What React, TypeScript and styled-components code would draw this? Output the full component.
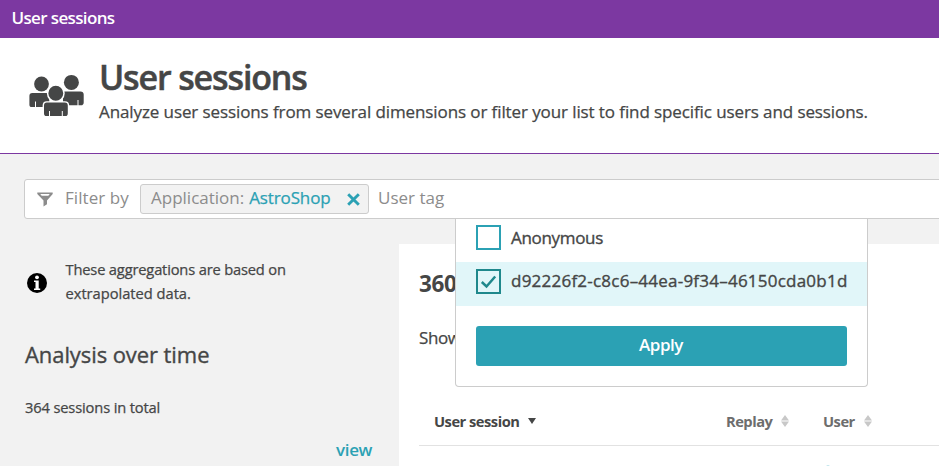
import React from "react";
import styled, { createGlobalStyle } from "styled-components";

const ink = "#454646";
const teal = "#2ba1b4";
const line = "#ccc";

const GlobalStyle = createGlobalStyle`
  * { box-sizing: border-box; }
  html, body, #root { margin: 0; height: 100%; }
  body {
    overflow: hidden;
    background: #f2f2f2;
    color: ${ink};
    font-family: "Open Sans", "Noto Sans", sans-serif;
    font-size: 17px;
    line-height: 24px;
    -webkit-text-stroke: 0.25px currentColor;
  }
  h1, h2, p { margin: 0; }
  button { font: inherit; border: 0; padding: 0; cursor: pointer; }
  svg { display: block; flex: none; }
`;

const Page = styled.div`
  height: 466px;
  overflow: hidden;
  display: flex;
  flex-direction: column;
`;

const TopBar = styled.nav`
  flex: none;
  height: 38px;
  padding-left: 11.5px;
  background: #7c38a1;
  color: #fff;
  font-weight: 600;
  letter-spacing: -0.64px;
  line-height: 35px;
  -webkit-text-stroke: 0;
`;

const Header = styled.header`
  flex: none;
  display: flex;
  height: 116px;
  padding: 19px 0 0 28px;
  background: #fff;
  border-bottom: 1px solid #7c38a1;
  svg { margin-top: 16px; }
`;

const Heading = styled.div`
  margin-left: 14px;
  white-space: nowrap;
`;

const Title = styled.h1`
  font-size: 34px;
  font-weight: 600;
  letter-spacing: -1.14px;
  line-height: 40px;
  -webkit-text-stroke: 0.5px currentColor;
`;

const Subtitle = styled.p`
  margin-top: 3px;
  letter-spacing: -0.1px;
`;

const FilterBar = styled.div`
  position: relative;
  z-index: 1;
  flex: none;
  display: flex;
  align-items: center;
  height: 40px;
  margin: 25px -10px 0 24px;
  padding-left: 12px;
  border: 1px solid ${line};
  border-radius: 3px;
  background: #fff;
  color: #8c8c8c;
  white-space: nowrap;
  -webkit-text-stroke: 0;
`;

const FilterLabel = styled.span`
  width: 75px;
  margin-left: 12px;
  padding-bottom: 2px;
  letter-spacing: 0.06px;
`;

const Chip = styled.div`
  display: flex;
  align-items: center;
  width: 229px;
  height: 30px;
  margin-right: 9px;
  padding: 0 8px 2px 10px;
  border: 1px solid ${line};
  border-radius: 3px;
  background: #f2f2f2;
`;

const ChipValue = styled.span`
  margin-left: 5px;
  color: ${teal};
  letter-spacing: -0.13px;
  -webkit-text-stroke: 0.25px currentColor;
`;

const ClearButton = styled.button`
  margin: 2px 0 0 auto;
  background: none;
  color: ${teal};
`;

const Placeholder = styled.span`
  padding-bottom: 2px;
`;

const Dropdown = styled.div`
  position: absolute;
  top: 39px;
  left: 430px;
  width: 413px;
  height: 168px;
  border: 1px solid ${line};
  border-top: 0;
  border-radius: 0 0 4px 4px;
  background: #fff;
  color: ${ink};
`;

const Option = styled.label<{ $checked?: boolean }>`
  display: flex;
  align-items: center;
  gap: 10px;
  height: ${(p) => (p.$checked ? 44 : 43)}px;
  padding: 0 0 ${(p) => (p.$checked ? 5 : 6)}px 20px;
  background: ${(p) => (p.$checked ? "#e1f6f9" : "#fff")};
  letter-spacing: ${(p) => (p.$checked ? "0.23px" : "-0.32px")};
  -webkit-text-stroke: 0.35px currentColor;
`;

const OptionText = styled.span`
  padding-bottom: 1px;
`;

const CheckBox = styled.span<{ $checked?: boolean }>`
  display: grid;
  place-items: center;
  width: 25px;
  height: 25px;
  border: 2px solid ${(p) => (p.$checked ? "#1f888c" : teal)};
  color: #1f888c;
`;

const ApplyButton = styled.button`
  display: block;
  width: 371px;
  height: 40px;
  margin: 20px 0 0 20px;
  padding: 0 1px 2px 0;
  border-radius: 3px;
  background: ${teal};
  color: #fff;
  font-weight: 600;
  letter-spacing: -0.45px;
`;

const Body = styled.div`
  flex: 1;
  display: flex;
  min-height: 0;
`;

const Sidebar = styled.aside`
  flex: none;
  width: 399px;
  padding: 38px 27px 0 25px;
`;

const Notice = styled.div`
  display: flex;
  gap: 18.5px;
  padding-left: 2px;
  font-size: 14.7px;
  svg { margin-top: 16px; }
`;

const NoticeLine = styled.div<{ $spacing: number }>`
  letter-spacing: ${(p) => p.$spacing}px;
`;

const SideTitle = styled.h2`
  margin-top: 34px;
  font-size: 22px;
  font-weight: 400;
  letter-spacing: -0.08px;
  line-height: 30px;
  -webkit-text-stroke: 0.35px currentColor;
`;

const Total = styled.p`
  margin-top: 26px;
  font-size: 14.7px;
  letter-spacing: -0.15px;
`;

const ViewLink = styled.a`
  display: block;
  margin-top: 19px;
  color: ${teal};
  font-weight: 600;
  letter-spacing: -0.4px;
  text-align: right;
  -webkit-text-stroke: 0;
`;

const Main = styled.main`
  flex: 1;
  min-width: 0;
  margin-top: 25px;
  padding: 25px 0 0 20px;
  background: #fff;
`;

const Count = styled.h2`
  font-size: 22.5px;
  font-weight: 700;
  letter-spacing: -0.4px;
  line-height: 30px;
  -webkit-text-stroke: 0;
`;

const Showing = styled.p`
  margin-top: 27px;
  letter-spacing: -0.4px;
`;

const TableRow = styled.div<{ $head?: boolean }>`
  display: grid;
  grid-template-columns: 292px 97px 1fr;
  align-items: ${(p) => (p.$head ? "center" : "start")};
  height: 48px;
  margin-top: ${(p) => (p.$head ? "48px" : "0")};
  padding: 0 0 ${(p) => (p.$head ? "2px" : "0")} 15px;
  border-bottom: 1px solid #e2e2e2;
`;

const HeadCell = styled.div<{ $active?: boolean }>`
  display: flex;
  align-items: center;
  gap: 9px;
  color: ${(p) => (p.$active ? ink : "#6d6d6d")};
  font-size: 14.7px;
  font-weight: 700;
  letter-spacing: -0.5px;
  -webkit-text-stroke: 0;
`;

const UserCell = styled.div`
  grid-column: 3;
  padding: 19px 0 0 1px;
`;

const PeopleIcon = () => (
  <svg width="57" height="44" viewBox="28 73 57 44" fill={ink}>
    <circle cx="41.5" cy="84" r="7.4" />
    <circle cx="71.4" cy="82.4" r="7.5" />
    <path d="M32.3 93h17v14H36v-5.5h-1V107h-3.3c-1.5 0-2.3-.8-2.3-2.3V96c0-2 1-3 2.9-3z" />
    <path d="M63 91.4h17.5c2 0 3.2 1 3.2 3v8c0 1.8-1 2.9-2.7 2.9h-2.5v-5.3h-1v5.3H63z" />
    <circle cx="55.8" cy="93.3" r="8.2" stroke="#fff" strokeWidth="1.5" />
    <path d="M46.8 101.9h18.1c2.2 0 3.6 1.4 3.6 3.6v7.7c0 2-1.2 3.6-3.2 3.6H46.5c-2 0-3.2-1.6-3.2-3.6v-7.7c0-2.2 1.3-3.6 3.5-3.6z" stroke="#fff" strokeWidth="1.4" />
    <path d="M49.5 111v5.5M62.3 111v5.5" stroke="#fff" strokeWidth="1" fill="none" />
  </svg>
);

const FunnelIcon = () => (
  <svg width="16" height="15" viewBox="0 0 16 15">
    <path fill="#8c8c8c" fillRule="evenodd" d="M.3.5h15.4v1.5L10 8.5v3.8L6.500 14.5v-6L.3 2zM3.200 2l1.500 1.700h6.600L12.800 2z" />
  </svg>
);

const InfoIcon = () => (
  <svg width="20" height="20" viewBox="0 0 20 20">
    <circle cx="10" cy="10" r="10" fill="#000" />
    <circle cx="10" cy="4.3" r="1.9" fill="#fff" />
    <path d="M7 7.5h4.7v8h1.500V17H7v-1.500h1.500V9H7z" fill="#fff" />
  </svg>
);

const CloseIcon = () => (
  <svg width="13" height="13" viewBox="0 0 13 13" stroke="currentColor" strokeWidth="2.9">
    <path d="M1.200 1.200l10.600 10.600M11.800 1.200L1.200 11.800" />
  </svg>
);

const CheckIcon = () => (
  <svg width="17" height="14" viewBox="0 0 17 14" fill="none" stroke="currentColor" strokeWidth="2.5">
    <path d="M1.800 7l4.700 4.500L15.200 1.500" />
  </svg>
);

const SortIcon = () => (
  <svg width="8" height="12" viewBox="0 0 8 12" fill="#c8c8c8">
    <path d="M4 0l4 5.400H0zM4 12l4-5.400H0z" />
  </svg>
);

const SortedIcon = () => (
  <svg width="8" height="6" viewBox="0 0 8 6" fill={ink}>
    <path d="M0 0h8L4 6z" />
  </svg>
);

const UserDot = () => (
  <svg width="8" height="8" viewBox="0 0 8 8" fill="#6fc3d1">
    <circle cx="4" cy="4.300" r="3.700" />
  </svg>
);

export default function App() {
  return (
    <Page>
      <GlobalStyle />
      <TopBar>User sessions</TopBar>
      <Header>
        <PeopleIcon />
        <Heading>
          <Title>User sessions</Title>
          <Subtitle>
            Analyze user sessions from several dimensions or filter your list to find specific users and sessions.
          </Subtitle>
        </Heading>
      </Header>
      <FilterBar>
        <FunnelIcon />
        <FilterLabel>Filter by</FilterLabel>
        <Chip>
          <span>Application:</span>
          <ChipValue>AstroShop</ChipValue>
          <ClearButton aria-label="Remove filter"><CloseIcon /></ClearButton>
        </Chip>
        <Placeholder>User tag</Placeholder>
        <Dropdown>
          <Option><CheckBox />Anonymous</Option>
          <Option $checked>
            <CheckBox $checked><CheckIcon /></CheckBox>
            <OptionText>d92226f2-c8c6–44ea-9f34–46150cda0b1d</OptionText>
          </Option>
          <ApplyButton>Apply</ApplyButton>
        </Dropdown>
      </FilterBar>
      <Body>
        <Sidebar>
          <Notice>
            <InfoIcon />
            <div>
              <NoticeLine $spacing={-0.176}>These aggregations are based on</NoticeLine>
              <NoticeLine $spacing={-0.02}>extrapolated data.</NoticeLine>
            </div>
          </Notice>
          <SideTitle>Analysis over time</SideTitle>
          <Total>364 sessions in total</Total>
          <ViewLink>view</ViewLink>
        </Sidebar>
        <Main>
          <Count>360</Count>
          <Showing>Show</Showing>
          <TableRow $head>
            <HeadCell $active>User session<SortedIcon /></HeadCell>
            <HeadCell>Replay<SortIcon /></HeadCell>
            <HeadCell>User<SortIcon /></HeadCell>
          </TableRow>
          <TableRow>
            <UserCell><UserDot /></UserCell>
          </TableRow>
        </Main>
      </Body>
    </Page>
  );
}
